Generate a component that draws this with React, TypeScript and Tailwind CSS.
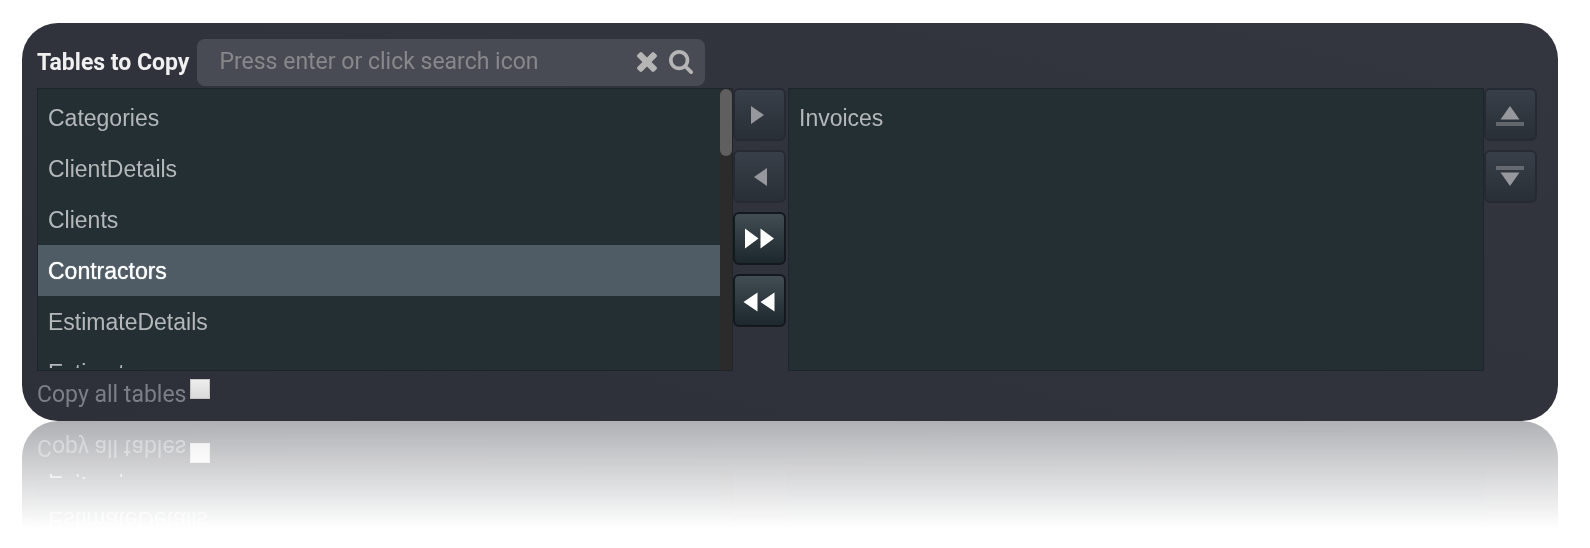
import { useState } from "react"
import type { ReactNode } from "react"

const TABLES = ["Categories", "ClientDetails", "Clients", "Contractors", "EstimateDetails", "Estimates"]

export default function App() {
  const [query, setQuery] = useState("")
  const [selected, setSelected] = useState("Contractors")
  const [copyAll, setCopyAll] = useState(false)

  return (
    <main className="bg-white pt-[23px] pl-[22px] pr-8 pb-32 font-[Roboto,sans-serif]">
      <section className="rounded-[36px] bg-linear-to-tr from-[#2d2f39] to-[#34363f] pt-4 pb-[10px] pl-[15px] pr-[21px] [-webkit-box-reflect:below_0px_linear-gradient(transparent_73%,rgba(255,255,255,0.38))]">
        {/* Heading and search */}
        <div className="flex items-center gap-2">
          <label htmlFor="table-search" className="text-[23px] leading-7 font-bold text-[#f0f0f0]">
            Tables to Copy
          </label>
          <div className="flex h-[47px] w-[508px] items-center gap-3 rounded-lg bg-[#494b54] pl-[22px] pr-3 pb-[2px] text-[#b5b5b5]">
            <input
              id="table-search"
              type="text"
              value={query}
              onChange={(e) => setQuery(e.target.value)}
              placeholder="Press enter or click search icon"
              className="min-w-0 flex-1 bg-transparent text-[23px] leading-7 text-gray-200 outline-none placeholder:text-[#87888b]"
            />
            <button type="button" aria-label="Clear search" onClick={() => setQuery("")}>
              <ClearIcon />
            </button>
            <button type="button" aria-label="Search">
              <SearchIcon />
            </button>
          </div>
        </div>

        {/* Available tables, chosen tables and their controls */}
        <div className="mt-[2px] flex items-start">
          <div className="flex h-[283px] min-w-0 flex-1 border border-[#1e262c] bg-[#242f34]">
            <TableList label="Available tables" items={TABLES} selected={selected} onSelect={setSelected} />
            <div className="w-3 bg-[#2b2b2b]">
              <div className="h-[67px] rounded-md bg-[#5f5f5f]" />
            </div>
          </div>

          <div className="mr-[2px] flex flex-col gap-[9px]">
            <MoveButton label="Add table" disabled>
              <path d="M18 18L31 27L18 36Z" />
            </MoveButton>
            <MoveButton label="Remove table" disabled>
              <path d="M34 18L21 27L34 36Z" />
            </MoveButton>
            <MoveButton label="Add all tables">
              <path d="M12 16.500L25.500 26.500L12 36.500ZM27.500 16.500L41 26.500L27.500 36.500Z" />
            </MoveButton>
            <MoveButton label="Remove all tables">
              <path d="M24.500 18.500L10.500 28L24.500 37.500ZM41.500 18.500L27.500 28L41.500 37.500Z" />
            </MoveButton>
          </div>

          <div className="flex h-[283px] min-w-0 flex-1 border border-[#1e262c] bg-[#242f34]">
            <TableList label="Tables to copy" items={["Invoices"]} selected={selected} onSelect={setSelected} />
          </div>

          <div className="flex flex-col gap-[9px]">
            <MoveButton label="Move to top" disabled>
              <path d="M26 18L35.500 31.500H16.500Z" />
              <path d="M12 34H40V38H12Z" opacity="0.5" />
            </MoveButton>
            <MoveButton label="Move to bottom" disabled>
              <path d="M12 16H40V20H12Z" opacity="0.5" />
              <path d="M16.500 22.500H35.500L26 36Z" />
            </MoveButton>
          </div>
        </div>

        <label className="mt-2 flex items-start gap-1 text-[23px] leading-8 text-[#7d7f87]">
          Copy all tables
          <input
            type="checkbox"
            checked={copyAll}
            onChange={(e) => setCopyAll(e.target.checked)}
            className="size-5 appearance-none border border-[#c4c4c4] bg-linear-to-b from-[#eeeeee] to-[#d9d9d9] checked:bg-blue-500"
          />
        </label>
      </section>
    </main>
  )
}

interface TableListProps {
  label: string
  items: string[]
  selected: string
  onSelect: (name: string) => void
}

function TableList({ label, items, selected, onSelect }: TableListProps) {
  return (
    <ul role="listbox" aria-label={label} className="mb-[2px] min-w-0 flex-1 overflow-hidden pt-[3px]">
      {items.map((name) => (
        <li
          key={name}
          role="option"
          tabIndex={0}
          aria-selected={name === selected}
          onClick={() => onSelect(name)}
          className="h-[51px] cursor-default pl-[10px] font-['Liberation_Sans',sans-serif] text-[23px] leading-[53px] whitespace-nowrap text-[#b4b8ba] aria-selected:bg-[#4f5c65] aria-selected:text-white aria-selected:text-shadow-[0_0_1px_#ffffff]"
        >
          {name}
        </li>
      ))}
    </ul>
  )
}

interface MoveButtonProps {
  label: string
  disabled?: boolean
  children: ReactNode
}

function MoveButton({ label, disabled, children }: MoveButtonProps) {
  return (
    <button
      type="button"
      aria-label={label}
      disabled={disabled}
      className="size-[53px] rounded-md border-2 border-[#14191e] bg-linear-to-b from-[#414c53] to-[#1d272e] text-white disabled:border-[#262a33] disabled:from-[#393f48] disabled:to-[#282f37] disabled:text-[#97989d]"
    >
      <svg viewBox="2 2 49 49" className="size-[49px]" fill="currentColor" aria-hidden="true">
        {children}
      </svg>
    </button>
  )
}

function ClearIcon() {
  return (
    <svg viewBox="302 366 1188 1188" className="size-5" fill="currentColor" aria-hidden="true">
      <path d="M1490 1322q0 40-28 68l-136 136q-28 28-68 28t-68-28l-294-294-294 294q-28 28-68 28t-68-28l-136-136q-28-28-28-68t28-68l294-294-294-294q-28-28-28-68t28-68l136-136q28-28 68-28t68 28l294 294 294-294q28-28 68-28t68 28l136 136q28 28 28 68t-28 68l-294 294 294 294q28 28 28 68z" />
    </svg>
  )
}

function SearchIcon() {
  return (
    <svg viewBox="64 128 1664 1664" className="size-6" fill="currentColor" aria-hidden="true">
      <path d="M1216 832q0-185-131.500-316.500t-316.500-131.500-316.500 131.500-131.500 316.500 131.500 316.500 316.500 131.500 316.500-131.500 131.500-316.500zm512 832q0 52-38 90t-90 38q-54 0-90-38l-343-342q-179 124-399 124-143 0-273.500-55.500t-225-150-150-225-55.500-273.500 55.500-273.500 150-225 225-150 273.500-55.500 273.500 55.500 225 150 150 225 55.500 273.500q0 220-124 399l343 343q37 37 37 90z" />
    </svg>
  )
}
